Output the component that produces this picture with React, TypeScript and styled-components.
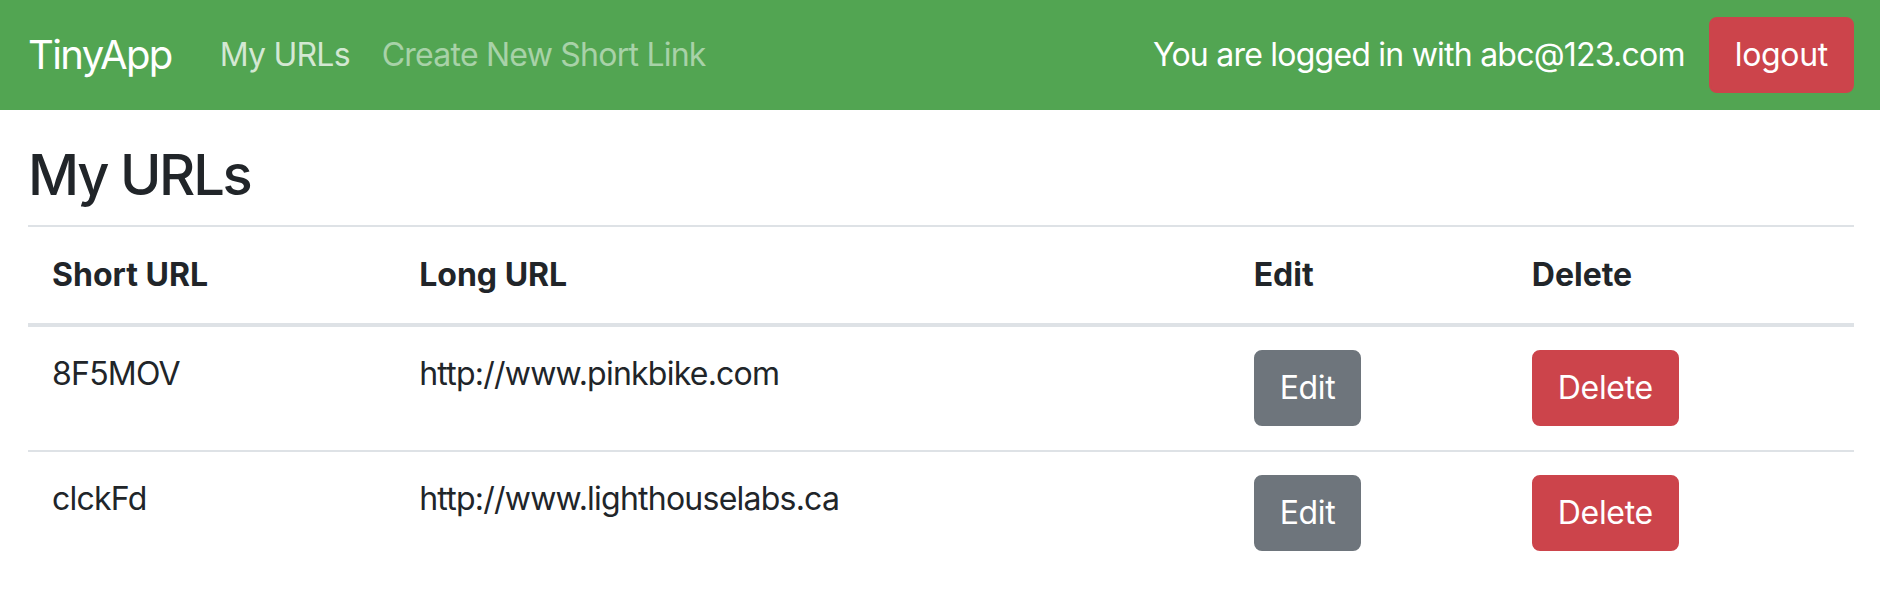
import React from "react";
import styled, { createGlobalStyle } from "styled-components";

const GlobalStyle = createGlobalStyle`
  html, body {
    margin: 0;
    padding: 0;
    background: #ffffff;
  }
  body {
    font-family: Inter, "Noto Sans", "Liberation Sans", sans-serif;
    font-size: 32px;
    line-height: 1.5;
    letter-spacing: -0.024em;
    color: #212529;
    -webkit-font-smoothing: antialiased;
  }
  * { box-sizing: border-box; }
`;

const Navbar = styled.nav`
  display: flex;
  align-items: center;
  height: 110px;
  padding: 0 26px 0 28px;
  background: #52a552;
`;

const Brand = styled.a`
  font-size: 40px;
  line-height: 60px;
  letter-spacing: -0.04em;
  color: #ffffff;
  text-decoration: none;
  margin-right: 32px;
`;

const NavLinks = styled.div`
  display: flex;
  align-items: center;
  flex: 1;
`;

const NavLink = styled.a<{ $active?: boolean }>`
  font-size: 32px;
  line-height: 48px;
  padding: 16px;
  text-decoration: none;
  color: ${(p) => (p.$active ? "rgba(255,255,255,0.75)" : "rgba(255,255,255,0.5)")};
`;

const UserInfo = styled.span`
  font-size: 32px;
  line-height: 48px;
  color: #ffffff;
  margin-right: 24px;
`;

const Button = styled.button<{ $variant: "danger" | "secondary" }>`
  font-family: inherit;
  font-size: 32px;
  line-height: 48px;
  letter-spacing: -0.01em;
  padding: 12px 24px;
  border: 2px solid ${(p) => (p.$variant === "danger" ? "#cc444b" : "#6e757c")};
  border-radius: 8px;
  color: #ffffff;
  background: ${(p) => (p.$variant === "danger" ? "#cc444b" : "#6e757c")};
  cursor: pointer;
`;

const Main = styled.main`
  padding: 0 26px 0 28px;
`;

const Title = styled.h1`
  font-size: 56px;
  font-weight: 500;
  line-height: 1.2;
  letter-spacing: -0.04em;
  margin: 32px 0 16px;
`;

const Table = styled.table`
  width: 100%;
  border-collapse: collapse;
`;

const HeadCell = styled.th<{ $width: number }>`
  width: ${(p) => p.$width}px;
  text-align: left;
  font-weight: 700;
  letter-spacing: 0;
  padding: 24px;
  line-height: 48px;
  vertical-align: bottom;
  border-top: 2px solid #dee2e6;
  border-bottom: 4px solid #dee2e6;
`;

const Cell = styled.td`
  padding: 23px 24px 24px;
  line-height: 48px;
  vertical-align: top;
  border-top: 2px solid #dee2e6;
`;

const rows = [
  { short: "8F5MOV", long: "http://www.pinkbike.com" },
  { short: "clckFd", long: "http://www.lighthouselabs.ca" },
];

export default function App() {
  return (
    <>
      <GlobalStyle />
      <Navbar>
        <Brand href="#">TinyApp</Brand>
        <NavLinks>
          <NavLink href="#" $active>My URLs</NavLink>
          <NavLink href="#">Create New Short Link</NavLink>
        </NavLinks>
        <UserInfo>You are logged in with abc@123.com</UserInfo>
        <Button $variant="danger">logout</Button>
      </Navbar>
      <Main>
        <Title>My URLs</Title>
        <Table>
          <thead>
            <tr>
              <HeadCell $width={367}>Short URL</HeadCell>
              <HeadCell $width={834}>Long URL</HeadCell>
              <HeadCell $width={278}>Edit</HeadCell>
              <HeadCell $width={346}>Delete</HeadCell>
            </tr>
          </thead>
          <tbody>
            {rows.map((r) => (
              <tr key={r.short}>
                <Cell>{r.short}</Cell>
                <Cell>{r.long}</Cell>
                <Cell>
                  <Button $variant="secondary">Edit</Button>
                </Cell>
                <Cell>
                  <Button $variant="danger">Delete</Button>
                </Cell>
              </tr>
            ))}
          </tbody>
        </Table>
      </Main>
    </>
  );
}
